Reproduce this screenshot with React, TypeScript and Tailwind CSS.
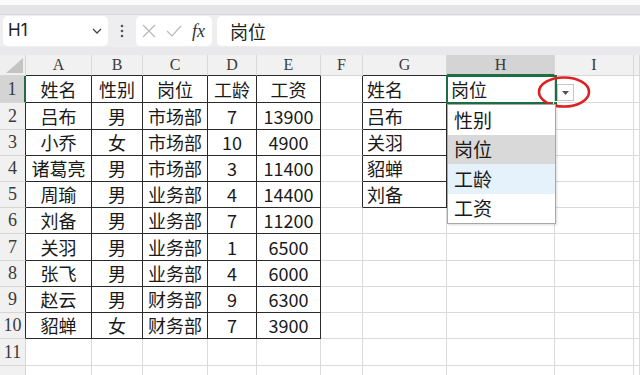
import React from "react"

const COLS = [26, 66, 51, 65, 49, 64, 42, 84, 108, 79, 6]
const LETTERS = ["", "A", "B", "C", "D", "E", "F", "G", "H", "I", ""]
const ROW_H = [27, 27, 26, 26, 26, 26, 27, 26, 26, 26, 27, 12]

const TABLE = [
    ["姓名", "性别", "岗位", "工龄", "工资"],
    ["吕布", "男", "市场部", "7", "13900"],
    ["小乔", "女", "市场部", "10", "4900"],
    ["诸葛亮", "男", "市场部", "3", "11400"],
    ["周瑜", "男", "业务部", "4", "14400"],
    ["刘备", "男", "业务部", "7", "11200"],
    ["关羽", "男", "业务部", "1", "6500"],
    ["张飞", "男", "业务部", "4", "6000"],
    ["赵云", "男", "财务部", "9", "6300"],
    ["貂蝉", "女", "财务部", "7", "3900"],
]
const LOOKUP = ["姓名", "吕布", "关羽", "貂蝉", "刘备"]
const OPTIONS = ["性别", "岗位", "工龄", "工资"]

const cjk = "font-['Noto_Sans_CJK_SC','Noto_Sans',sans-serif]"
const serif = "font-['Liberation_Serif','DejaVu_Serif',serif]"

const cellText = (r: number, c: number) => {
    if (r <= 10 && c >= 1 && c <= 5) return TABLE[r - 1][c - 1]
    if (c === 7 && r <= 5) return LOOKUP[r - 1]
    if (c === 8 && r === 1) return "岗位"
    return ""
}

const inTable = (r: number, c: number) => (r <= 10 && c >= 1 && c <= 5) || (c === 7 && r <= 5)

const Cell = ({ r, c }: { r: number; c: number }) => {
    const rightDark = inTable(r, c) || (c === 6 && r <= 5)
    const bottomDark = inTable(r, c)
    const centered = c >= 1 && c <= 5
    return (
        <div
            style={{ width: COLS[c] }}
            className={`shrink-0 h-full border-r border-b flex items-center overflow-hidden whitespace-nowrap ${cjk} text-[18px] text-[#1a1a1a] ${
                rightDark ? "border-r-[#2a2a2a]" : "border-r-[#dadada]"
            } ${bottomDark ? "border-b-[#2a2a2a]" : "border-b-[#dadada]"} ${centered ? "justify-center" : "pl-[4px]"}`}
        >
            {cellText(r, c)}
        </div>
    )
}

const HeaderRow = () => (
    <div className="flex h-[21px]">
        <div className="w-[26px] shrink-0 relative bg-[#efefef] border-r border-b border-[#d6d6d6]">
            <svg width="17" height="15" viewBox="0 0 17 15" className="absolute right-[2px] bottom-[2px]">
                <polygon points="17,0 17,15 0,15" fill="#c4c4c4" />
            </svg>
        </div>
        {COLS.slice(1).map((w, i) => {
            const c = i + 1
            const active = c === 8
            const darkBottom = (c >= 1 && c <= 5) || c === 7
            return (
                <div
                    key={c}
                    style={{ width: w }}
                    className={`shrink-0 flex items-center justify-center ${serif} text-[16px] text-[#3a3a3a] border-r border-r-[#d9d9d9] ${
                        active
                            ? "bg-[#d4d4d4] border-b-2 border-b-[#1e6e43]"
                            : darkBottom
                            ? "bg-[#f1f1f1] border-b border-b-[#2a2a2a]"
                            : "bg-[#f1f1f1] border-b border-b-[#d6d6d6]"
                    }`}
                >
                    {LETTERS[c]}
                </div>
            )
        })}
    </div>
)

const Row = ({ r }: { r: number }) => (
    <div className="flex" style={{ height: ROW_H[r - 1] }}>
        <div
            className={`w-[26px] shrink-0 flex items-center justify-center ${serif} text-[18px] text-[#3a3a3a] border-b border-b-[#d6d6d6] ${
                r === 1
                    ? "bg-[#d4d4d4] border-r-2 border-r-[#1e6e43]"
                    : r <= 10
                    ? "bg-[#f1f1f1] border-r border-r-[#2a2a2a]"
                    : "bg-[#f1f1f1] border-r border-r-[#d6d6d6]"
            }`}
        >
            {r <= 11 ? r : ""}
        </div>
        {COLS.slice(1).map((_, i) => (
            <Cell key={i} r={r} c={i + 1} />
        ))}
    </div>
)

const FormulaBar = () => (
    <div className="bg-[#eeeef0]">
        <div className="h-[5px] bg-[#fbfbfa]" />
        <div className="h-[10px] bg-[#e4e4e8] border-b border-[#d8d8dc]" />
        <div className="flex items-center h-[32px] pl-[3px] gap-[5px]">
            <div className="w-[105px] h-[30px] bg-white rounded-[5px] flex items-center justify-between pl-[5px] pr-[6px]">
                <span className="font-['Inter','Noto_Sans',sans-serif] text-[17px] text-[#222]">H1</span>
                <svg width="10" height="6" viewBox="0 0 10 6">
                    <path d="M1 1 L5 5 L9 1" stroke="#444" strokeWidth="1.3" fill="none" />
                </svg>
            </div>
            <div className="w-[18px] flex justify-center">
                <svg width="4" height="14" viewBox="0 0 4 14">
                    <circle cx="2" cy="2" r="1.3" fill="#555" />
                    <circle cx="2" cy="7" r="1.3" fill="#555" />
                    <circle cx="2" cy="12" r="1.3" fill="#555" />
                </svg>
            </div>
            <div className="w-[76px] h-[30px] bg-white rounded-[5px] flex items-center gap-[10px] pl-[6px]">
                <svg width="14" height="14" viewBox="0 0 14 14">
                    <path d="M1 1 L13 13 M13 1 L1 13" stroke="#b8b8b8" strokeWidth="1.2" />
                </svg>
                <svg width="16" height="12" viewBox="0 0 16 12">
                    <path d="M1 6 L6 11 L15 1" stroke="#b8b8b8" strokeWidth="1.2" fill="none" />
                </svg>
                <span className={`${serif} italic text-[18px] text-[#333] leading-none`}>fx</span>
            </div>
            <div className="flex-1 h-[30px] bg-white rounded-l-[5px] flex items-center pl-[13px]">
                <span className={`${cjk} text-[18px] text-[#222]`}>岗位</span>
            </div>
        </div>
        <div className="h-[8px] bg-[#e9e9eb]" />
    </div>
)

export default function App() {
    return (
        <div className="w-[640px] h-[375px] overflow-hidden bg-white">
            <FormulaBar />
            <div className="relative">
                <HeaderRow />
                {ROW_H.map((_, i) => (
                    <Row key={i} r={i + 1} />
                ))}

                {/* selected cell H1 */}
                <div className="absolute left-[446px] top-[20px] w-[111px] h-[29px] border-2 border-[#1e6e43] pointer-events-none" />
                <div className="absolute left-[553px] top-[46px] w-[5px] h-[5px] bg-[#1e6e43] border border-white" />

                {/* dropdown button */}
                <div className="absolute left-[557px] top-[29px] w-[17px] h-[17px] bg-white border border-[#c6c6c6] flex items-center justify-center">
                    <svg width="7" height="4" viewBox="0 0 7 4">
                        <polygon points="0,0 7,0 3.5,4" fill="#555" />
                    </svg>
                </div>

                {/* red circle annotation */}
                <svg width="54" height="34" viewBox="0 0 54 34" className="absolute left-[537px] top-[20px]">
                    <ellipse cx="27" cy="17" rx="25" ry="14.5" stroke="#e02020" strokeWidth="2.6" fill="none" />
                </svg>

                {/* validation list */}
                <div className={`absolute left-[447px] top-[49px] w-[109px] bg-white border border-[#a8a8a8] shadow-[1px_1px_2px_rgba(0,0,0,0.15)] ${cjk} text-[19px] text-[#1a1a1a]`}>
                    {OPTIONS.map((o, i) => (
                        <div
                            key={o}
                            className={`h-[29.5px] flex items-center pl-[6px] ${
                                i === 1 ? "bg-[#d9d9d9]" : i === 2 ? "bg-[#e5f1fb]" : "bg-white"
                            }`}
                        >
                            {o}
                        </div>
                    ))}
                </div>
            </div>
        </div>
    )
}
